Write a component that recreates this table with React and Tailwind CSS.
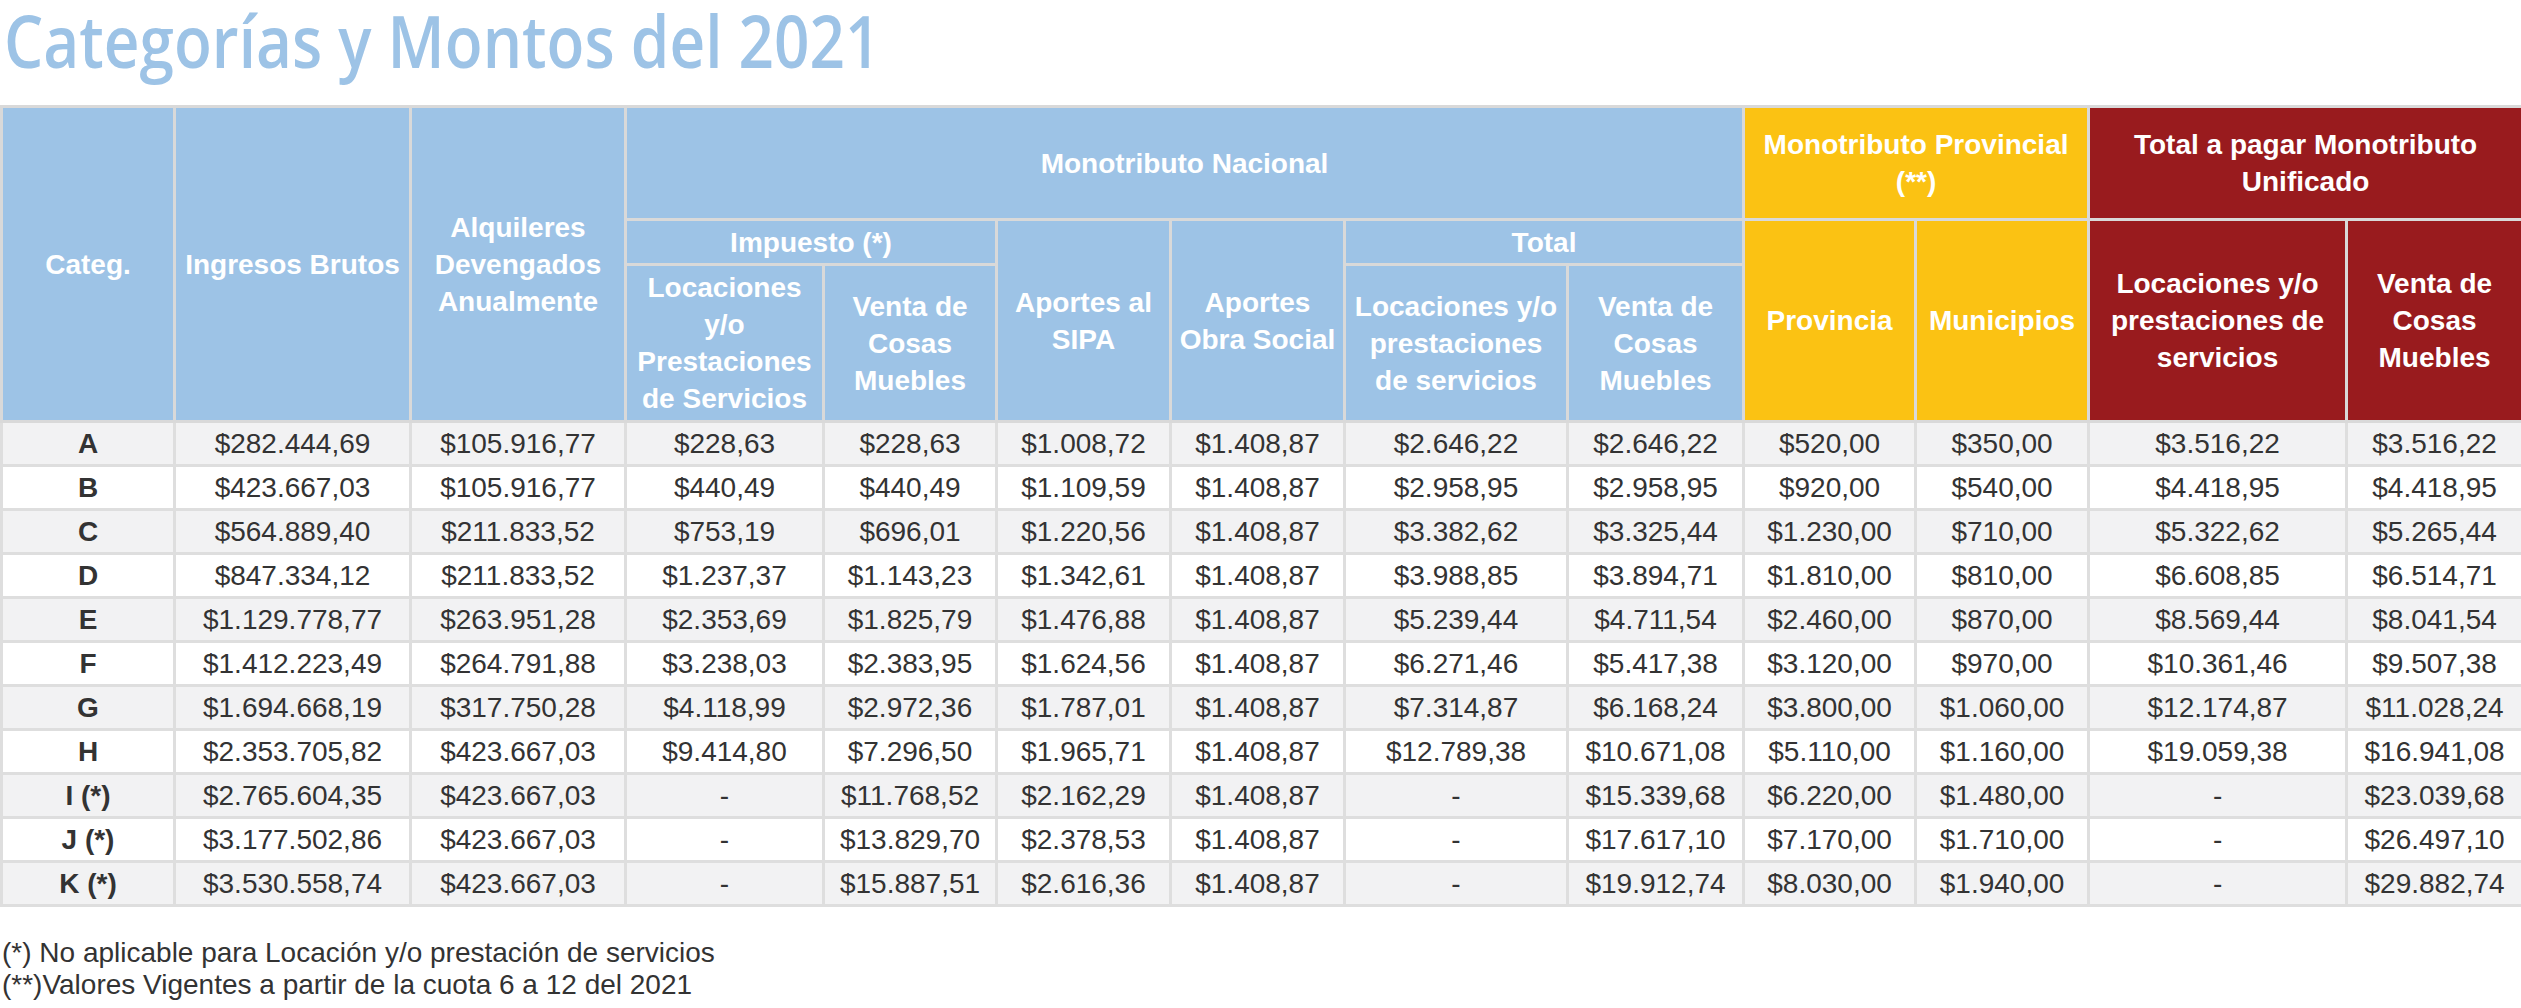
import React from 'react';

const rows = [
  ['A', '$282.444,69', '$105.916,77', '$228,63', '$228,63', '$1.008,72', '$1.408,87', '$2.646,22', '$2.646,22', '$520,00', '$350,00', '$3.516,22', '$3.516,22'],
  ['B', '$423.667,03', '$105.916,77', '$440,49', '$440,49', '$1.109,59', '$1.408,87', '$2.958,95', '$2.958,95', '$920,00', '$540,00', '$4.418,95', '$4.418,95'],
  ['C', '$564.889,40', '$211.833,52', '$753,19', '$696,01', '$1.220,56', '$1.408,87', '$3.382,62', '$3.325,44', '$1.230,00', '$710,00', '$5.322,62', '$5.265,44'],
  ['D', '$847.334,12', '$211.833,52', '$1.237,37', '$1.143,23', '$1.342,61', '$1.408,87', '$3.988,85', '$3.894,71', '$1.810,00', '$810,00', '$6.608,85', '$6.514,71'],
  ['E', '$1.129.778,77', '$263.951,28', '$2.353,69', '$1.825,79', '$1.476,88', '$1.408,87', '$5.239,44', '$4.711,54', '$2.460,00', '$870,00', '$8.569,44', '$8.041,54'],
  ['F', '$1.412.223,49', '$264.791,88', '$3.238,03', '$2.383,95', '$1.624,56', '$1.408,87', '$6.271,46', '$5.417,38', '$3.120,00', '$970,00', '$10.361,46', '$9.507,38'],
  ['G', '$1.694.668,19', '$317.750,28', '$4.118,99', '$2.972,36', '$1.787,01', '$1.408,87', '$7.314,87', '$6.168,24', '$3.800,00', '$1.060,00', '$12.174,87', '$11.028,24'],
  ['H', '$2.353.705,82', '$423.667,03', '$9.414,80', '$7.296,50', '$1.965,71', '$1.408,87', '$12.789,38', '$10.671,08', '$5.110,00', '$1.160,00', '$19.059,38', '$16.941,08'],
  ['I (*)', '$2.765.604,35', '$423.667,03', '-', '$11.768,52', '$2.162,29', '$1.408,87', '-', '$15.339,68', '$6.220,00', '$1.480,00', '-', '$23.039,68'],
  ['J (*)', '$3.177.502,86', '$423.667,03', '-', '$13.829,70', '$2.378,53', '$1.408,87', '-', '$17.617,10', '$7.170,00', '$1.710,00', '-', '$26.497,10'],
  ['K (*)', '$3.530.558,74', '$423.667,03', '-', '$15.887,51', '$2.616,36', '$1.408,87', '-', '$19.912,74', '$8.030,00', '$1.940,00', '-', '$29.882,74'],
];

// celdas de encabezado
const th = 'border-[3px] border-[#d9d9d9] px-[6px] text-center align-middle font-bold text-white';
const blue = `${th} bg-[#9dc3e6]`;
const yellow = `${th} bg-[#fbc213]`;
const red = `${th} bg-[#991b1e]`;

export default function App() {
  return (
    <div className="w-[2521px] bg-white font-['Liberation_Sans',Arial,sans-serif] text-[28px] leading-[37px]">
      {/* TITULO */}
      <div className="h-[105px] pl-[4px] pt-[2px]">
        <h1 className="inline-block origin-left scale-x-[0.85] font-['Open_Sans',sans-serif] text-[73px] leading-[76px] font-semibold text-[#9dc3e6] whitespace-nowrap">
          Categorías y Montos del 2021
        </h1>
      </div>

      <table className="w-[2521px] table-fixed border-collapse">
        <colgroup>
          <col className="w-[173px]" />
          <col className="w-[236px]" />
          <col className="w-[215px]" />
          <col className="w-[198px]" />
          <col className="w-[173px]" />
          <col className="w-[174px]" />
          <col className="w-[174px]" />
          <col className="w-[223px]" />
          <col className="w-[176px]" />
          <col className="w-[172px]" />
          <col className="w-[173px]" />
          <col className="w-[258px]" />
          <col className="w-[176px]" />
        </colgroup>
        <thead>
          <tr className="h-[113px]">
            <th rowSpan={3} className={blue}>Categ.</th>
            <th rowSpan={3} className={blue}>Ingresos Brutos</th>
            <th rowSpan={3} className={blue}>Alquileres Devengados Anualmente</th>
            <th colSpan={6} className={blue}>Monotributo Nacional</th>
            <th colSpan={2} className={yellow}>Monotributo Provincial (**)</th>
            <th colSpan={2} className={red}>Total a pagar Monotributo Unificado</th>
          </tr>
          <tr className="h-[45px]">
            <th colSpan={2} className={blue}>Impuesto (*)</th>
            <th rowSpan={2} className={blue}>Aportes al SIPA</th>
            <th rowSpan={2} className={blue}>Aportes Obra Social</th>
            <th colSpan={2} className={blue}>Total</th>
            <th rowSpan={2} className={yellow}>Provincia</th>
            <th rowSpan={2} className={yellow}>Municipios</th>
            <th rowSpan={2} className={red}>Locaciones y/o prestaciones de servicios</th>
            <th rowSpan={2} className={red}>Venta de Cosas Muebles</th>
          </tr>
          <tr className="h-[157px]">
            <th className={blue}>Locaciones y/o Prestaciones de Servicios</th>
            <th className={blue}>Venta de Cosas Muebles</th>
            <th className={blue}>Locaciones y/o prestaciones de servicios</th>
            <th className={blue}>Venta de Cosas Muebles</th>
          </tr>
        </thead>
        <tbody className="text-[#333333]">
          {rows.map((row, idx) => (
            <tr key={idx} className={`h-[44px] ${idx % 2 === 0 ? 'bg-[#f2f2f3]' : 'bg-white'}`}>
              {row.map((cell, c) => (
                <td
                  key={c}
                  className={`border-[3px] border-[#dedede] px-[4px] text-center align-middle whitespace-nowrap ${c === 0 ? 'font-bold' : ''}`}
                >
                  {cell}
                </td>
              ))}
            </tr>
          ))}
        </tbody>
      </table>

      {/* NOTAS */}
      <div className="mt-[30px] pl-[2px] text-[28px] leading-[32px] text-[#333333]">
        <p>(*) No aplicable para Locación y/o prestación de servicios</p>
        <p>(**)Valores Vigentes a partir de la cuota 6 a 12 del 2021</p>
      </div>
    </div>
  );
}
